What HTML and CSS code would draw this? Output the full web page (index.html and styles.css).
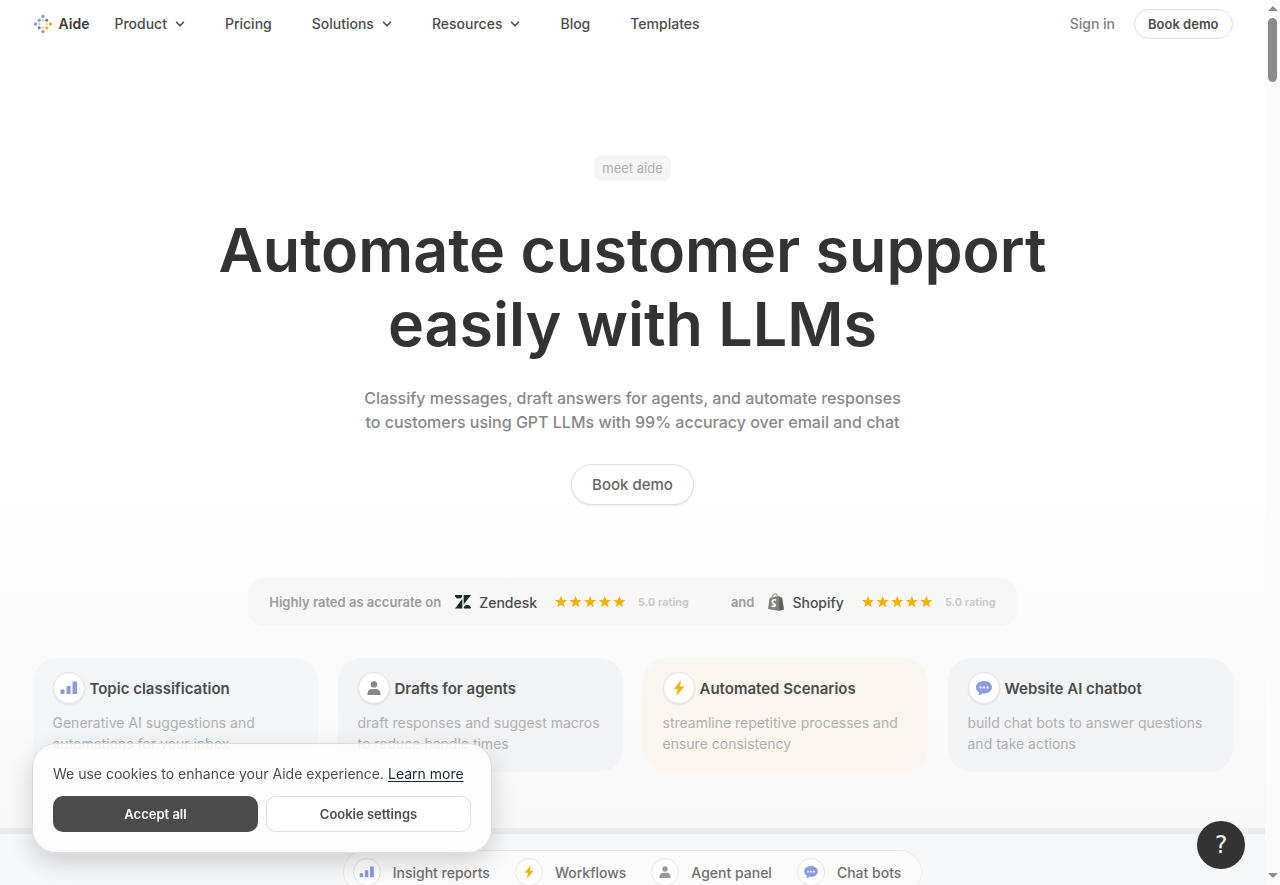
FILE: index.html
```html
<!DOCTYPE html>
<html lang="en">
<head>
    <meta charset="utf-8">
    <title>Aide - Automate customer support easily with LLMs</title>
    <meta name="viewport" content="width=device-width, initial-scale=1">
    <link rel="stylesheet" href="styles.css">
</head>
<body>
    <!-- shared icons -->
    <svg class="sprite" aria-hidden="true">
        <symbol id="chevron" viewBox="0 0 10 10"><path d="M1.5 3.2 5 6.7l3.5-3.5" fill="none" stroke="currentColor" stroke-width="1.6" stroke-linecap="round" stroke-linejoin="round"/></symbol>
        <symbol id="bars" viewBox="0 0 18 14"><path fill="#8b9bdd" d="M.5 9q0-.5.500-.5h3.500v4.500h-4zM6.500 5.500q0-.5.500-.5h3.500v8h-4zM12.500 1q0-.5.500-.5h4V13h-4.500z"/></symbol>
        <symbol id="user" viewBox="0 0 14 14"><circle cx="7" cy="3.400" r="3.200"/><path d="M.5 14v-1.500C.5 9.800 2.600 8 5.200 8h3.600c2.600 0 4.700 1.800 4.700 4.500V14z"/></symbol>
        <symbol id="bolt" viewBox="0 0 12 16"><path fill="#eeb211" d="M8 0 .8 9h4L3.500 16 11.500 6.500H7z"/></symbol>
        <symbol id="chat" viewBox="0 0 16 14"><path fill="#8b9bdd" d="M8 0c4.500 0 8 2.800 8 6.300s-3.500 6.300-8 6.300c-.7 0-1.300 0-1.900-.2C5.200 13.500 4 14 2.300 14c.7-.8 1-1.700.9-2.600C1.200 10.200 0 8.400 0 6.300 0 2.800 3.500 0 8 0z"/><path fill="#fff" d="M3.500 5.500h2v2h-2zM7 5.500h2v2H7zM10.500 5.500h2v2h-2z"/></symbol>
        <symbol id="stars" viewBox="0 0 72 14">
            <g fill="#eeb211">
                <path id="star" d="m7 .8 1.600 4.100 4.400.2-3.400 2.800 1.100 4.300L7 9.800l-3.700 2.400 1.100-4.300L1 5.100l4.400-.2z"/>
                <use href="#star" x="14.600"/>
                <use href="#star" x="29.200"/>
                <use href="#star" x="43.800"/>
                <use href="#star" x="58.400"/>
            </g>
        </symbol>
    </svg>

    <div class="page">
        <header class="header">
            <a class="logo" href="#">
                <svg width="20" height="20" viewBox="0 0 20 20" aria-hidden="true">
                    <g fill="#8b9bdd"><circle cx="10" cy="2.500" r="1.700"/><circle cx="6.200" cy="6.200" r="1.600"/><circle cx="2.500" cy="10" r="1.700"/></g>
                    <g fill="#777"><circle cx="13.800" cy="6.200" r="1.500"/><circle cx="6.200" cy="13.800" r="1.500"/></g>
                    <g fill="#eeb211"><circle cx="17.500" cy="10" r="1.700"/><circle cx="13.800" cy="13.800" r="1.600"/></g>
                    <circle cx="10" cy="17.500" r="1.600" fill="#999"/>
                    <g fill="#ccc"><circle cx="10" cy="6.200" r="1.200"/><circle cx="6.200" cy="10" r="1.200"/><circle cx="13.800" cy="10" r="1.200" fill="#f1d68a"/><circle cx="10" cy="13.800" r="1.200"/></g>
                </svg>
                Aide
            </a>
            <nav class="nav">
                <button type="button">Product <svg class="chevron"><use href="#chevron"/></svg></button>
                <a href="#">Pricing</a>
                <button type="button">Solutions <svg class="chevron"><use href="#chevron"/></svg></button>
                <button type="button">Resources <svg class="chevron"><use href="#chevron"/></svg></button>
                <a href="#">Blog</a>
                <a href="#">Templates</a>
            </nav>
            <a class="sign-in" href="#">Sign in</a>
            <button class="demo demo-small" type="button">Book demo</button>
        </header>

        <main>
            <section class="hero">
                <span class="badge">meet aide</span>
                <h1>Automate customer support<br>easily with LLMs</h1>
                <p>Classify messages, draft answers for agents, and automate responses<br>to customers using GPT LLMs with 99% accuracy over email and chat</p>
                <button class="demo" type="button">Book demo</button>
            </section>

            <section class="ratings">
                <span class="ratings-text">Highly rated as accurate on</span>
                <span class="brand">
                    <svg width="16" height="14" viewBox="0 0 16 14" aria-hidden="true"><path fill="#17292b" d="M0 0h7.300a3.650 3.500 0 0 1-7.300 0zM7.300 4v9.500H0zM8.700 0H16L8.700 9.500zM8.700 13.500a3.650 3.500 0 0 1 7.300 0z"/></svg>
                    Zendesk
                </span>
                <svg class="stars" role="img" aria-label="5 stars"><use href="#stars"/></svg>
                <span class="score">5.0 rating</span>
                <span class="ratings-text ratings-and">and</span>
                <span class="brand">
                    <svg width="16" height="18" viewBox="0 0 16 18" aria-hidden="true">
                        <path d="M4 5C4.500 2.500 6 .8 7.500.8S9.500 2.500 9.500 5" fill="none" stroke="#aaa27c" stroke-width="1.200"/>
                        <path fill="#81827e" d="M1.600 5 11 3v15L0 16z"/>
                        <path fill="#626262" d="m11 3 1.800 1.400 1.400.2L16 16.600 11 18z"/>
                        <path d="M8.200 7.200C6.500 6.200 4.300 7 4.300 8.700c0 2 2.900 1.900 2.900 3.600 0 1.300-1.900 1.500-3.500.5" fill="none" stroke="#fff" stroke-width="1.700"/>
                    </svg>
                    Shopify
                </span>
                <svg class="stars" role="img" aria-label="5 stars"><use href="#stars"/></svg>
                <span class="score">5.0 rating</span>
            </section>

            <section class="cards">
                <article class="card card-blue">
                    <h2><span class="icon"><svg width="18" height="14"><use href="#bars"/></svg></span>Topic classification</h2>
                    <p>Generative AI suggestions and automations for your inbox</p>
                </article>
                <article class="card">
                    <h2><span class="icon"><svg width="14" height="14"><use href="#user"/></svg></span>Drafts for agents</h2>
                    <p>draft responses and suggest macros to reduce handle times</p>
                </article>
                <article class="card card-yellow">
                    <h2><span class="icon"><svg width="12" height="16"><use href="#bolt"/></svg></span>Automated Scenarios</h2>
                    <p>streamline repetitive processes and ensure consistency</p>
                </article>
                <article class="card">
                    <h2><span class="icon"><svg width="16" height="14"><use href="#chat"/></svg></span>Website AI chatbot</h2>
                    <p>build chat bots to answer questions and take actions</p>
                </article>
            </section>
        </main>

        <section class="features">
            <div class="tabs">
                <button type="button"><span class="icon icon-small"><svg width="16" height="12"><use href="#bars"/></svg></span>Insight reports</button>
                <button type="button"><span class="icon icon-small"><svg width="10" height="14"><use href="#bolt"/></svg></span>Workflows</button>
                <button type="button"><span class="icon icon-small"><svg width="12" height="12"><use href="#user"/></svg></span>Agent panel</button>
                <button type="button"><span class="icon icon-small"><svg width="14" height="12"><use href="#chat"/></svg></span>Chat bots</button>
            </div>
        </section>
    </div>

    <div class="scrollbar" aria-hidden="true">
        <span class="arrow arrow-up"></span>
        <span class="thumb"></span>
        <span class="arrow arrow-down"></span>
    </div>

    <div class="cookies">
        <p>We use cookies to enhance your Aide experience. <a href="#">Learn more</a></p>
        <div class="cookies-actions">
            <button class="accept" type="button">Accept all</button>
            <button class="settings" type="button">Cookie settings</button>
        </div>
    </div>
    <button class="help" type="button" aria-label="Help">?</button>
</body>
</html>
```
FILE: styles.css
```css
* {
    box-sizing: border-box;
}
body {
    margin: 0;
    height: 100vh;
    overflow: hidden;
    display: flex;
    font-family: Inter, 'Liberation Sans', sans-serif;
    color: #4c4c4c;
    background: #fff;
}
button {
    font: inherit;
    color: inherit;
    border: none;
    background: none;
    padding: 0;
    cursor: pointer;
}
a {
    color: inherit;
    text-decoration: none;
}
h1, h2, p {
    margin: 0;
}
.sprite {
    position: absolute;
    width: 0;
    height: 0;
}
.page {
    flex: 1;
    min-width: 0;
    overflow: hidden;
    background: linear-gradient(#fff 480px, #f7f7f7 828px);
}

/* Header */
.header {
    max-width: 1200px;
    height: 47px;
    margin: 0 auto;
    display: flex;
    align-items: center;
    font-size: 14px;
    font-weight: 500;
}
.logo {
    display: flex;
    align-items: center;
    gap: 6px;
    margin-right: 25px;
    font-weight: 600;
    color: #3c3c3c;
}
.nav {
    flex: 1;
    display: flex;
    gap: 40px;
}
.nav button {
    display: flex;
    align-items: center;
    gap: 8px;
}
.chevron {
    width: 10px;
    height: 10px;
}
.sign-in {
    margin-right: 19px;
    color: #808080;
}
.demo {
    height: 41px;
    padding: 0 20px;
    border: 1px solid #dedede;
    border-radius: 21px;
    background: #fff;
    box-shadow: 0 1px 2px rgba(0, 0, 0, 0.08);
    font-size: 15px;
    font-weight: 500;
    color: #666;
}
.demo-small {
    height: 30px;
    padding: 0 13px;
    font-size: 13px;
    font-weight: 600;
    color: #4c4c4c;
    box-shadow: none;
}

/* Hero */
.hero {
    display: flex;
    flex-direction: column;
    align-items: center;
    padding-top: 108px;
    text-align: center;
}
.badge {
    padding: 0 8px;
    border-radius: 8px;
    background: #f5f5f5;
    font-size: 13px;
    line-height: 26px;
    color: #b0b0b0;
}
h1 {
    margin: 32px 0 25px;
    font-size: 61px;
    font-weight: 600;
    line-height: 74px;
    color: #333;
}
.hero p {
    margin-bottom: 30px;
    font-size: 16px;
    font-weight: 500;
    line-height: 24px;
    color: #888;
}

/* Ratings */
.ratings {
    width: fit-content;
    height: 48px;
    margin: 73px auto 32px;
    padding: 0 21px;
    display: flex;
    align-items: center;
    border-radius: 16px;
    background: #f7f7f7;
    font-weight: 500;
}
.ratings-text {
    font-size: 13px;
    font-weight: 600;
    color: #9c9c9c;
}
.ratings-and {
    margin-left: 42px;
}
.brand {
    display: flex;
    align-items: center;
    gap: 8px;
    margin: 0 17px 0 14px;
    font-size: 14px;
}
.stars {
    width: 72px;
    height: 14px;
    margin-right: 12px;
}
.score {
    font-size: 11px;
    font-weight: 600;
    color: #c8c8c8;
}

/* Cards */
.cards {
    max-width: 1200px;
    margin: 0 auto;
    display: grid;
    grid-template-columns: repeat(4, 1fr);
    gap: 20px;
}
.card {
    padding: 14px 20px 18px;
    border-radius: 24px;
    background: #f2f3f5;
}
.card-blue {
    background: #f3f6f9;
}
.card-yellow {
    background: #faf5ed;
}
.card h2 {
    display: flex;
    align-items: center;
    gap: 5px;
    margin: 0 0 8px;
    font-size: 15px;
    font-weight: 600;
}
.card p {
    font-size: 14px;
    line-height: 21px;
    color: #b0b0b0;
}
.icon {
    width: 32px;
    height: 32px;
    display: flex;
    align-items: center;
    justify-content: center;
    flex-shrink: 0;
    border: 1px solid #e4e5e6;
    border-radius: 50%;
    background: #fff;
    box-shadow: 0 1px 2px rgba(0, 0, 0, 0.08);
    fill: #888;
}
.icon-small {
    width: 28px;
    height: 28px;
    box-shadow: none;
    fill: #999;
}

/* Feature tabs */
.features {
    margin-top: 56px;
    padding: 16px 0 200px;
    border-top: 6px solid #ebedec;
    background: #f6f7f8;
}
.tabs {
    width: fit-content;
    height: 44px;
    margin: 0 auto;
    padding: 0 20px 0 9px;
    display: flex;
    align-items: center;
    gap: 25px;
    border: 1px solid #e9eaea;
    border-radius: 22px;
    background: #fbfbfb;
}
.tabs button {
    display: flex;
    align-items: center;
    gap: 12px;
    font-size: 14px;
    font-weight: 500;
    color: #707070;
}

/* Scrollbar */
.scrollbar {
    width: 15px;
    padding: 6px 0 7px;
    display: flex;
    flex-direction: column;
    align-items: center;
    background: #fcfcfc;
}
.thumb {
    width: 9px;
    height: 64px;
    margin: 7px 0 auto;
    border-radius: 5px;
    background: #8b8c8a;
}
.arrow {
    border: 5px solid transparent;
}
.arrow-up {
    border-top: none;
    border-bottom-color: #8b8c8a;
}
.arrow-down {
    border-bottom: none;
    border-top-color: #8b8c8a;
}

/* Cookie banner */
.cookies {
    position: fixed;
    left: 32px;
    bottom: 32px;
    width: 460px;
    padding: 20px;
    border: 1px solid #dedede;
    border-radius: 24px;
    background: linear-gradient(rgba(253, 253, 253, 0.85), #fdfdfd 20px);
    box-shadow: 0 10px 24px rgba(0, 0, 0, 0.16);
    font-size: 14px;
    line-height: 20px;
}
.cookies a {
    color: #17292b;
    text-decoration: underline;
    text-underline-offset: 2px;
}
.cookies-actions {
    display: grid;
    grid-template-columns: 1fr 1fr;
    gap: 8px;
    margin-top: 12px;
}
.cookies button {
    height: 36px;
    border-radius: 10px;
    font-size: 13px;
    font-weight: 600;
}
.cookies .accept {
    background: #4b4b4b;
    color: #fff;
}
.cookies .settings {
    border: 1px solid #dedede;
    background: #fff;
}
.help {
    position: fixed;
    right: 35px;
    bottom: 16px;
    width: 48px;
    height: 48px;
    border-radius: 50%;
    background: #333;
    color: #f4f4f4;
    font-family: 'DejaVu Sans', sans-serif;
    font-size: 24px;
}
```
